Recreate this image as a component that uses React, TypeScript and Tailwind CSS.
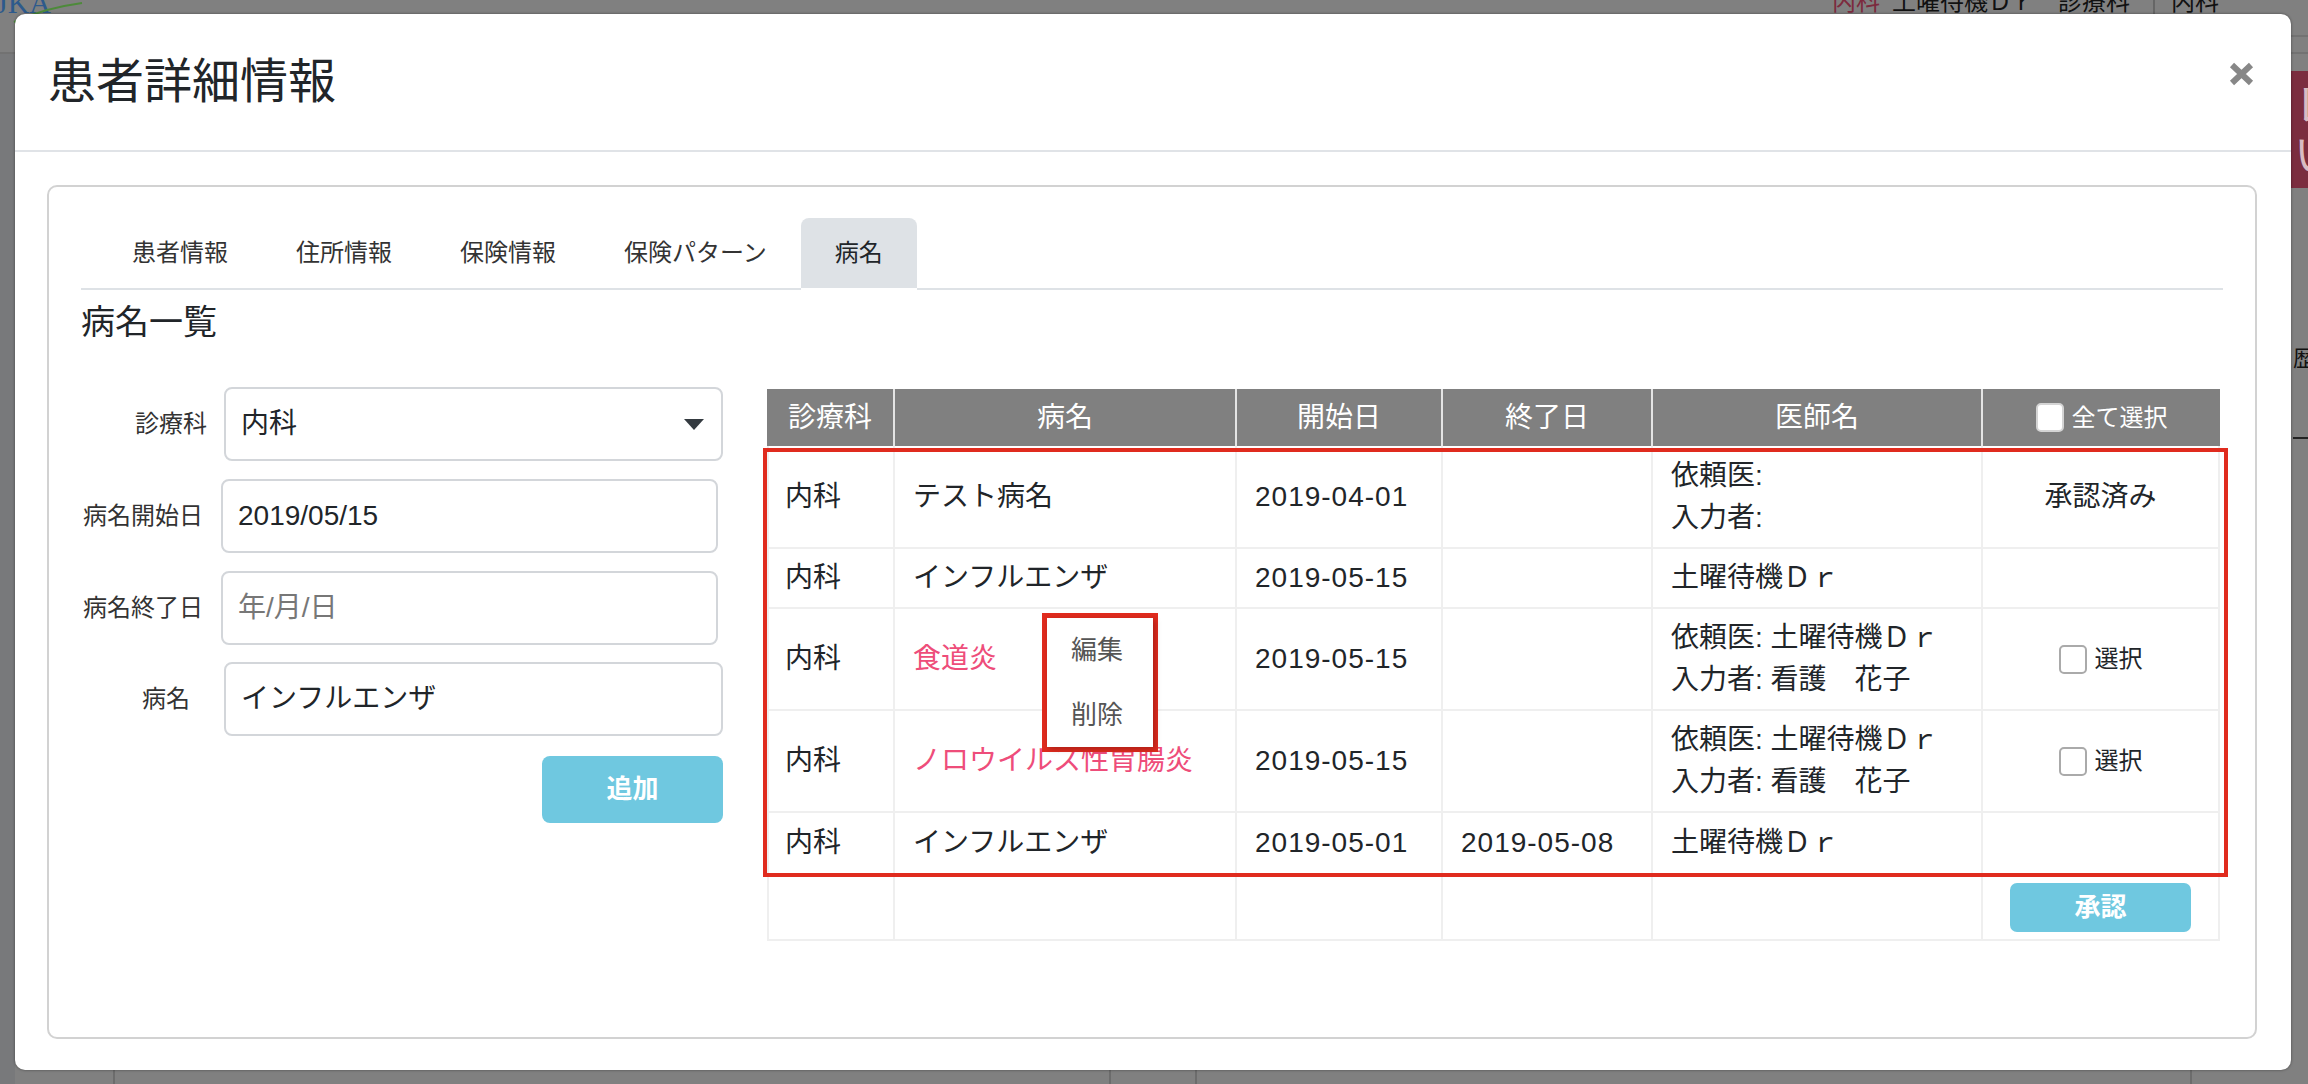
import React from "react";

type Row = {
  h: string;
  dept?: string;
  name?: string;
  pink?: boolean;
  start?: string;
  end?: string;
  doctor?: string[];
  status?: "done" | "check" | "button";
};

const rows: Row[] = [
  { h: "h-[103px]", dept: "内科", name: "テスト病名", start: "2019-04-01", doctor: ["依頼医:", "入力者:"], status: "done" },
  { h: "h-[60px]", dept: "内科", name: "インフルエンザ", start: "2019-05-15", doctor: ["土曜待機Ｄｒ"] },
  { h: "h-[102px]", dept: "内科", name: "食道炎", pink: true, start: "2019-05-15", doctor: ["依頼医: 土曜待機Ｄｒ", "入力者: 看護　花子"], status: "check" },
  { h: "h-[102px]", dept: "内科", name: "ノロウイルス性胃腸炎", pink: true, start: "2019-05-15", doctor: ["依頼医: 土曜待機Ｄｒ", "入力者: 看護　花子"], status: "check" },
  { h: "h-[62px]", dept: "内科", name: "インフルエンザ", start: "2019-05-01", end: "2019-05-08", doctor: ["土曜待機Ｄｒ"] },
  { h: "h-[66px]", status: "button" },
];

const tabs = ["患者情報", "住所情報", "保険情報", "保険パターン", "病名"];

function CheckBox({ head }: { head?: boolean }) {
  return (
    <span
      className={
        head
          ? "inline-block w-[28px] h-[29px] rounded-[5px] border-2 border-[#d4d4d4] bg-white"
          : "inline-block w-[28px] h-[29px] rounded-[5px] border-2 border-[#aaaaaa] bg-white"
      }
    />
  );
}

function Backdrop() {
  return (
    <div className="absolute inset-0 pointer-events-none">
      <div className="absolute left-0 top-[52px] w-full h-[2px] bg-[#727272]" />
      <div className="absolute right-0 top-[35px] w-[20px] h-[2px] bg-[#727272]" />
      <div className="absolute left-0 top-[54px] w-[15px] h-[1030px] bg-[#78797b]" />
      {/* logo */}
      <div className="absolute left-[-4px] top-[-12px] text-[30px] leading-[30px] text-[#2d5a8c] font-['Liberation_Serif',serif]">JKA</div>
      <svg className="absolute left-0 top-0" width="90" height="26" viewBox="0 0 90 26">
        <path d="M14 22 C 35 12, 60 6, 82 3" stroke="#4d8a3a" strokeWidth="2" fill="none" />
      </svg>
      {/* top right page text */}
      <div className="absolute left-[1832px] top-[-10px] text-[24px] leading-[24px] text-[#7c2a3d]">内科</div>
      <div className="absolute left-[1892px] top-[-10px] text-[24px] leading-[24px] text-[#111]">土曜待機Ｄｒ</div>
      <div className="absolute left-[2058px] top-[-10px] text-[24px] leading-[24px] text-[#111]">診療科</div>
      <div className="absolute left-[2153px] top-0 w-[2px] h-[20px] bg-[#666]" />
      <div className="absolute left-[2171px] top-[-10px] text-[24px] leading-[24px] text-[#111]">内科</div>
      {/* right edge */}
      <div className="absolute left-[2291px] top-[71px] w-[17px] h-[117px] bg-[#7b2d3f] overflow-hidden">
        <div className="pl-[3px] pt-[10px] text-[44px] leading-[50px] text-[#d9bcc3]">レ</div>
        <div className="pl-[3px] text-[44px] leading-[50px] text-[#d9bcc3]">い</div>
      </div>
      <div className="absolute left-[2293px] top-[346px] text-[22px] leading-[26px] text-[#111]">歴</div>
      <div className="absolute left-[2293px] top-[437px] w-[15px] h-[2px] bg-[#222]" />
      {/* bottom strip lines */}
      <div className="absolute left-[113px] top-[1070px] w-[2px] h-[14px] bg-[#6c6c6c]" />
      <div className="absolute left-[1109px] top-[1070px] w-[2px] h-[14px] bg-[#6c6c6c]" />
      <div className="absolute left-[1195px] top-[1070px] w-[2px] h-[14px] bg-[#6c6c6c]" />
      <div className="absolute left-[2190px] top-[1070px] w-[2px] h-[14px] bg-[#6c6c6c]" />
    </div>
  );
}

function DiseaseTable() {
  return (
    <div className="relative mt-[2px] w-[1453px] text-[28px] leading-[42px] text-[#212529]">
      <div className="flex h-[57px] bg-[#808080] text-white">
        <div className="w-[128px] flex items-center justify-center border-r-2 border-[#e4e4e4]">診療科</div>
        <div className="w-[342px] flex items-center justify-center border-r-2 border-[#e4e4e4]">病名</div>
        <div className="w-[206px] flex items-center justify-center border-r-2 border-[#e4e4e4]">開始日</div>
        <div className="w-[210px] flex items-center justify-center border-r-2 border-[#e4e4e4]">終了日</div>
        <div className="w-[330px] flex items-center justify-center border-r-2 border-[#e4e4e4]">医師名</div>
        <div className="w-[237px] flex items-center justify-center gap-[8px] text-[24px]">
          <CheckBox head />
          <span>全て選択</span>
        </div>
      </div>
      {rows.map((r, i) => (
        <div key={i} className={`flex border-l-2 border-b-2 border-[#efefef] ${r.h}`}>
          <div className="w-[126px] flex items-center pl-[16px] border-r-2 border-[#efefef]">{r.dept}</div>
          <div className={`w-[342px] flex items-center pl-[18px] border-r-2 border-[#efefef] ${r.pink ? "text-[#ee4d7a]" : ""}`}>{r.name}</div>
          <div className="w-[206px] flex items-center pl-[18px] border-r-2 border-[#efefef] tracking-[1px]">{r.start}</div>
          <div className="w-[210px] flex items-center pl-[18px] border-r-2 border-[#efefef] tracking-[1px]">{r.end}</div>
          <div className="w-[330px] flex flex-col justify-center pl-[18px] border-r-2 border-[#efefef]">
            {r.doctor?.map((d) => (
              <div key={d}>{d}</div>
            ))}
          </div>
          <div className="w-[237px] flex items-center justify-center border-r-2 border-[#efefef]">
            {r.status === "done" && <span>承認済み</span>}
            {r.status === "check" && (
              <span className="flex items-center gap-[8px] text-[24px]">
                <CheckBox />
                選択
              </span>
            )}
            {r.status === "button" && (
              <button className="w-[181px] h-[49px] rounded-[7px] bg-[#6fc8e0] text-white text-[26px] font-bold leading-none">承認</button>
            )}
          </div>
        </div>
      ))}

      {/* highlight outline */}
      <div className="absolute left-[-4px] top-[59px] w-[1465px] h-[429px] border-4 border-[#e02b1e] pointer-events-none" />

      {/* context menu */}
      <div className="absolute left-[275px] top-[224px] w-[116px] h-[139px] border-[5px] border-[#e02b1e]">
        <div className="h-full bg-white shadow-[2px_2px_6px_rgba(0,0,0,0.25)] text-[26px] text-[#555] flex flex-col">
          <div className="h-[64px] flex items-center pl-[24px]">編集</div>
          <div className="h-[65px] flex items-center pl-[24px]">削除</div>
        </div>
      </div>
    </div>
  );
}

function EntryForm() {
  return (
    <div className="w-[642px] flex flex-col text-[#212529]">
      <div className="flex items-center h-[74px]">
        <div className="w-[126px] text-right text-[24px] text-[#333]">診療科</div>
        <div className="ml-[17px] w-[499px] h-[74px] border-2 border-[#d3d6da] rounded-[8px] flex items-center justify-between pl-[15px] pr-[17px] text-[28px]">
          <span>内科</span>
          <svg width="20" height="11" viewBox="0 0 20 11">
            <path d="M0 0 H20 L10 11 Z" fill="#343a40" />
          </svg>
        </div>
      </div>
      <div className="flex items-center h-[74px] mt-[18px]">
        <div className="w-[122px] text-right text-[24px] text-[#333]">病名開始日</div>
        <div className="ml-[18px] w-[497px] h-[74px] border-2 border-[#d3d6da] rounded-[8px] flex items-center pl-[15px] text-[28px]">2019/05/15</div>
      </div>
      <div className="flex items-center h-[74px] mt-[18px]">
        <div className="w-[122px] text-right text-[24px] text-[#333]">病名終了日</div>
        <div className="ml-[18px] w-[497px] h-[74px] border-2 border-[#d3d6da] rounded-[8px] flex items-center pl-[15px] text-[28px] text-[#777]">年/月/日</div>
      </div>
      <div className="flex items-center h-[74px] mt-[17px]">
        <div className="w-[109px] text-right text-[24px] text-[#333]">病名</div>
        <div className="ml-[34px] w-[499px] h-[74px] border-2 border-[#d3d6da] rounded-[8px] flex items-center pl-[15px] text-[28px]">インフルエンザ</div>
      </div>
      <div className="flex justify-end mt-[20px]">
        <button className="w-[181px] h-[67px] rounded-[8px] bg-[#6fc8e0] text-white text-[26px] font-bold">追加</button>
      </div>
    </div>
  );
}

export default function App() {
  return (
    <div className="relative w-[2308px] h-[1084px] overflow-hidden bg-[#808080] font-['Liberation_Sans','Noto_Sans_CJK_JP',sans-serif]">
      <Backdrop />
      <div className="relative flex pl-[15px] pt-[14px]">
        <div className="w-[2276px] h-[1056px] bg-white rounded-[10px] shadow-[0_0_3px_rgba(0,0,0,0.45)] flex flex-col">
          <div className="h-[138px] border-b-2 border-[#e0e3e7] flex justify-between pl-[33px] pr-[37px]">
            <h4 className="self-center text-[48px] leading-[56px] text-[#212529]">患者詳細情報</h4>
            <button className="mt-[48px] self-start">
              <svg width="25" height="24" viewBox="0 0 25 24">
                <path d="M3 3 L22 21 M22 3 L3 21" stroke="#878787" strokeWidth="6" />
              </svg>
            </button>
          </div>
          <div className="pl-[32px] pt-[33px]">
            <div className="w-[2210px] h-[854px] border-2 border-[#d2d2d2] rounded-[10px] px-[32px] pt-[31px]">
              <div className="flex border-b-2 border-[#dee2e6] pl-[17px]">
                {tabs.map((t) => (
                  <div
                    key={t}
                    className={
                      t === "病名"
                        ? "h-[72px] mb-[-2px] px-[34px] flex items-center text-[24px] text-[#212529] bg-[#dee2e6] rounded-t-[8px] border-b-2 border-white"
                        : "h-[72px] mb-[-2px] px-[34px] flex items-center text-[24px] text-[#333] border-b-2 border-transparent"
                    }
                  >
                    {t}
                  </div>
                ))}
              </div>
              <h5 className="mt-[12px] text-[34px] leading-[40px] text-[#212529]">病名一覧</h5>
              <div className="mt-[45px] flex gap-[44px]">
                <EntryForm />
                <DiseaseTable />
              </div>
            </div>
          </div>
        </div>
      </div>
    </div>
  );
}
